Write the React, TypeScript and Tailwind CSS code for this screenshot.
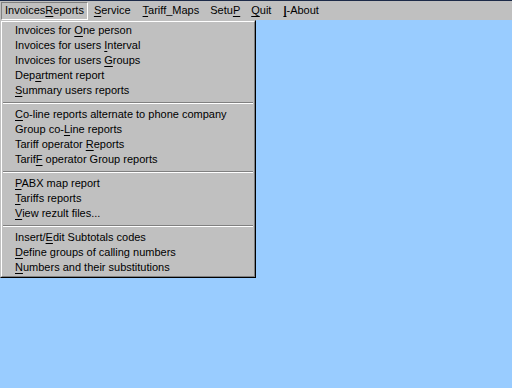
import type { ReactNode } from 'react'

type Item = { pre: string; key: string; post: string }

const groups: Item[][] = [
  [
    { pre: 'Invoices for ', key: 'O', post: 'ne person' },
    { pre: 'Invoices for users ', key: 'I', post: 'nterval' },
    { pre: 'Invoices for users ', key: 'G', post: 'roups' },
    { pre: 'Dep', key: 'a', post: 'rtment report' },
    { pre: '', key: 'S', post: 'ummary users reports' },
  ],
  [
    { pre: '', key: 'C', post: 'o-line reports alternate to phone company' },
    { pre: 'Group co-', key: 'L', post: 'ine reports' },
    { pre: 'Tariff operator ', key: 'R', post: 'eports' },
    { pre: 'Tarif', key: 'F', post: ' operator Group reports' },
  ],
  [
    { pre: '', key: 'P', post: 'ABX map report' },
    { pre: '', key: 'T', post: 'ariffs reports' },
    { pre: '', key: 'V', post: 'iew rezult files...' },
  ],
  [
    { pre: 'Insert/', key: 'E', post: 'dit Subtotals codes' },
    { pre: '', key: 'D', post: 'efine groups of calling numbers' },
    { pre: '', key: 'N', post: 'umbers and their substitutions' },
  ],
]

function Acc({ children }: { children: ReactNode }) {
  return <span className="underline underline-offset-[2px] decoration-1">{children}</span>
}

function TopItem({ pressed, className, children }: { pressed?: boolean; className?: string; children: ReactNode }) {
  return (
    <div
      className={
        'h-[18px] flex items-center px-[3px] border ' +
        (pressed ? 'border-t-[#808080] border-l-[#808080] border-b-white border-r-white ' : 'border-transparent ') +
        (className || '')
      }
    >
      <span className="whitespace-pre">{children}</span>
    </div>
  )
}

export default function App() {
  return (
    <div
      className="w-[512px] h-[388px] bg-[#99ccff] text-black text-[11px] leading-none relative overflow-hidden"
      style={{ fontFamily: '"Liberation Sans", Arial, sans-serif' }}
    >
      {/* menubar */}
      <div className="h-[20px] bg-[#c0c0c0] border-t border-[#1c2a48] flex items-center pl-[1px] gap-[2px]">
        <TopItem pressed>
          Invoices<Acc>R</Acc>eports
        </TopItem>
        <TopItem>
          <Acc>S</Acc>ervice
        </TopItem>
        <TopItem className="ml-[2px]">
          <Acc>T</Acc>ariff_Maps
        </TopItem>
        <TopItem className="ml-[1px]">
          Setu<Acc>P</Acc>
        </TopItem>
        <TopItem className="ml-[1px]">
          <Acc>Q</Acc>uit
        </TopItem>
        <TopItem className="ml-[2px]">
          <Acc><b>|</b></Acc>-About
        </TopItem>
      </div>

      {/* dropdown */}
      <div className="absolute left-0 top-[20px] w-[256px] border border-t-[#c0c0c0] border-l-[#c0c0c0] border-r-black border-b-black">
        <div className="border border-t-white border-l-white border-r-[#808080] border-b-[#808080] bg-[#c0c0c0] py-[1px]">
          {groups.map((g, gi) => (
            <div key={gi}>
              {gi > 0 && (
                <div className="h-[9px] flex flex-col justify-center px-[1px]">
                  <div className="h-px bg-[#808080]" />
                  <div className="h-px bg-white" />
                </div>
              )}
              {g.map((it, i) => (
                <div key={i} className="h-[15px] flex items-center pl-[13px]">
                  <span className="whitespace-pre">
                    {it.pre}
                    <Acc>{it.key}</Acc>
                    {it.post}
                  </span>
                </div>
              ))}
            </div>
          ))}
        </div>
      </div>
    </div>
  )
}
